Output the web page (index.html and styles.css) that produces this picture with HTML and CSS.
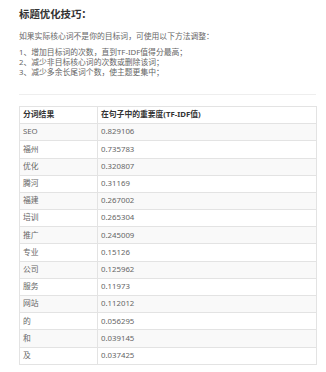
FILE: index.html
```html
<!DOCTYPE html>
<html lang="zh-CN">
<head>
<meta charset="utf-8">
<link rel="stylesheet" href="styles.css">
</head>
<body>
<div class="wrap">
  <h2 class="title">标题优化技巧：</h2>
  <p class="intro">如果实际核心词不是你的目标词，可使用以下方法调整：</p>
  <ul class="tips">
    <li>1、增加目标词的次数，直到TF-IDF值得分最高；</li>
    <li>2、减少非目标核心词的次数或删除该词；</li>
    <li>3、减少多余长尾词个数，使主题更集中；</li>
  </ul>
  <hr class="rule">
  <table class="result">
    <thead>
      <tr><th class="c1">分词结果</th><th>在句子中的重要度(TF-IDF值)</th></tr>
    </thead>
    <tbody>
      <tr><td>SEO</td><td>0.829106</td></tr>
      <tr><td>福州</td><td>0.735783</td></tr>
      <tr><td>优化</td><td>0.320807</td></tr>
      <tr><td>腾河</td><td>0.31169</td></tr>
      <tr><td>福建</td><td>0.267002</td></tr>
      <tr><td>培训</td><td>0.265304</td></tr>
      <tr><td>推广</td><td>0.245009</td></tr>
      <tr><td>专业</td><td>0.15126</td></tr>
      <tr><td>公司</td><td>0.125962</td></tr>
      <tr><td>服务</td><td>0.11973</td></tr>
      <tr><td>网站</td><td>0.112012</td></tr>
      <tr><td>的</td><td>0.056295</td></tr>
      <tr><td>和</td><td>0.039145</td></tr>
      <tr><td>及</td><td>0.037425</td></tr>
    </tbody>
  </table>
</div>
</body>
</html>
```

FILE: styles.css
```css
html, body {
  margin: 0;
  padding: 0;
  background: #ffffff;
}

body {
  font-family: "Noto Sans", "Noto Sans CJK SC", sans-serif;
  color: #666666;
}

.wrap {
  padding: 8px 10px 0 19px;
  display: flex;
  flex-direction: column;
}

.title {
  margin: 0;
  height: 13px;
  font-size: 10.4px;
  line-height: 13px;
  font-weight: bold;
  color: #333333;
}

.intro {
  margin: 9.5px 0 0;
  height: 10px;
  font-size: 7.8px;
  line-height: 10px;
  white-space: nowrap;
}

.tips {
  list-style: none;
  margin: 6.2px 0 0;
  padding: 0;
  display: flex;
  flex-direction: column;
  font-size: 7.8px;
}

.tips li {
  height: 10px;
  line-height: 10px;
  white-space: nowrap;
}

.rule {
  margin: 17.3px 0 0;
  border: 0;
  border-top: 1px solid #eeeeee;
  height: 0;
  width: 297px;
}

.result {
  margin-top: 11px;
  width: 298px;
  border-collapse: collapse;
  border: 1px solid #dddddd;
  font-size: 7.8px;
}

.result tr {
  height: 17.2px;
}

.result th,
.result td {
  border: 1px solid #e3e3e3;
  padding: 0 3px;
  text-align: left;
  vertical-align: middle;
  line-height: 9.6px;
}

.result th {
  font-weight: bold;
  color: #333333;
  background: #ffffff;
}

.result .c1 {
  width: 71px;
}

.result tbody tr:nth-child(odd) td {
  background: #f9f9f9;
}

.result tbody tr:nth-child(even) td {
  background: #ffffff;
}
```
